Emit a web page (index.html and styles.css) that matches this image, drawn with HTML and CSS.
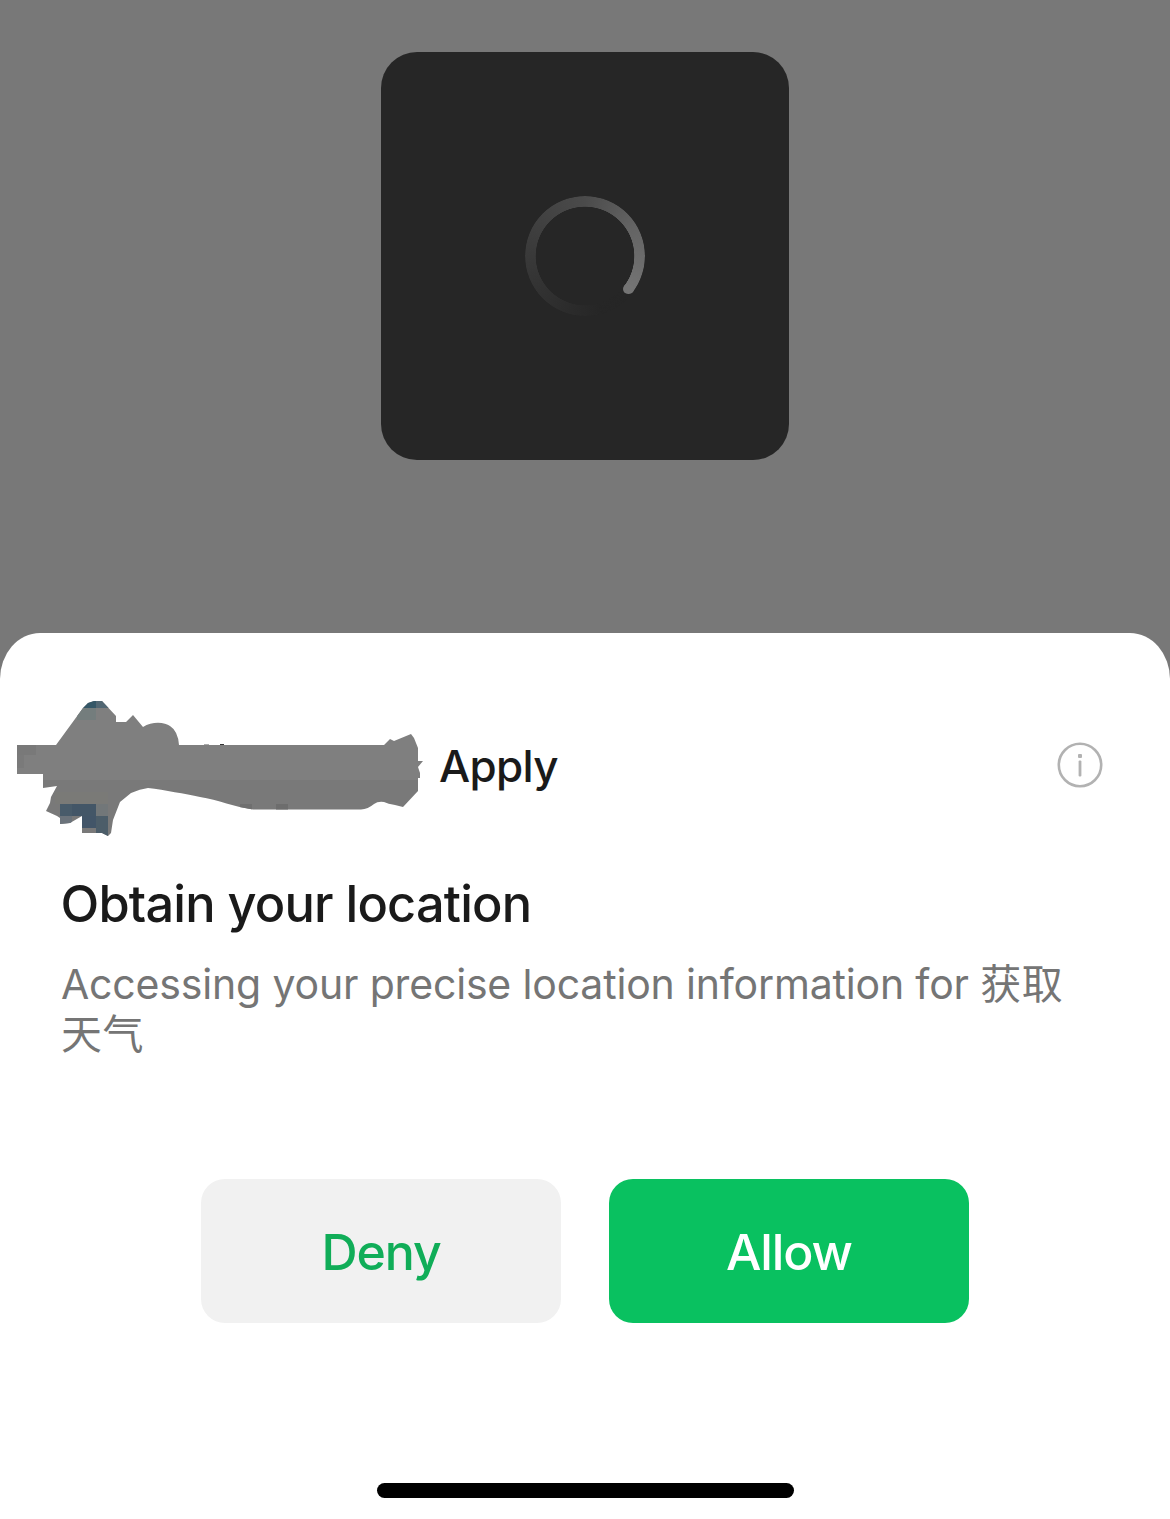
FILE: index.html
```html
<!DOCTYPE html>
<html lang="en">
<head>
    <meta charset="UTF-8">
    <title>Obtain your location</title>
    <link rel="stylesheet" href="styles.css">
</head>
<body>
    <div class="overlay">
        <div class="loading">
            <div class="spinner"></div>
        </div>
    </div>
    <div class="sheet">
        <div class="app-row">
            <svg class="app-name" width="410" height="140" viewBox="16 698 410 140">
                <clipPath id="blob">
                    <path d="M17 745H56L83 708L88 703L94 701H102L116 716V722H126L133 715L143 727C152 721 165 722 170 726Q178 731 179 745H384L390 739L394 741L411 734L414 738L418 748V761H423L418 767L420 773V778H418V791L403 807L395 805Q388 804 384 802Q378 801 374 804Q368 809 361 809.5H253C235 807 218 800 200 797C185 794 165 790 148 788Q140 789 131 793L120 802L113 820L111 833L108 836L102 833H82V816L70 823L60 824V818L57 816L46 811L50 803L51 797L57 786L43 788V774H17Z"/>
                </clipPath>
                <g clip-path="url(#blob)">
                    <rect x="16" y="698" width="410" height="82" fill="#7f7f7f"/>
                    <rect x="16" y="780" width="410" height="58" fill="#797979"/>
                    <rect x="17" y="745" width="19" height="10" fill="#797979"/>
                    <rect x="17" y="755" width="7" height="13" fill="#7a7a7a"/>
                    <rect x="77" y="708" width="19" height="12" fill="#747d7d"/>
                    <rect x="80" y="698" width="16" height="10" fill="#355767"/>
                    <rect x="96" y="698" width="14" height="10" fill="#526773"/>
                    <rect x="55" y="792" width="53" height="12" fill="#7a7a77"/>
                    <rect x="60" y="804" width="12" height="12" fill="#485b6a"/>
                    <rect x="72" y="804" width="24" height="12" fill="#435667"/>
                    <rect x="96" y="804" width="12" height="12" fill="#727779"/>
                    <rect x="60" y="816" width="12" height="8" fill="#6b737b"/>
                    <rect x="82" y="816" width="14" height="12" fill="#425568"/>
                    <rect x="96" y="816" width="12" height="22" fill="#4c5d69"/>
                    <rect x="240" y="804" width="12" height="6" fill="#6f6f6f"/>
                    <rect x="276" y="804" width="12" height="6" fill="#6d6d6d"/>
                </g>
                <path d="M204 744h5v1h-5z" fill="#aaa"/>
                <path d="M220 744h4v1h-4z" fill="#333"/>
            </svg>
            <span class="apply">Apply</span>
            <svg class="info" width="46" height="46" viewBox="0 0 46 46">
                <circle cx="23" cy="23" r="21.2" fill="none" stroke="#b2b2b2" stroke-width="2.6"/>
                <rect x="21" y="12" width="4" height="4" rx="1" fill="#b2b2b2"/>
                <rect x="21.6" y="18.5" width="2.8" height="16" rx="1" fill="#b2b2b2"/>
            </svg>
        </div>
        <h2 class="title">Obtain your location</h2>
        <p class="desc"><span class="desc-text">Accessing your precise location information for </span>获取<br>天气</p>
        <div class="buttons">
            <button class="btn deny">Deny</button>
            <button class="btn allow">Allow</button>
        </div>
        <div class="home-bar"></div>
    </div>
</body>
</html>
```
FILE: styles.css
```css
* {
    box-sizing: border-box;
}

body {
    margin: 0;
    height: 1519px;
    overflow: hidden;
    background-color: #787878;
    font-family: Inter, "Noto Sans CJK SC", sans-serif;
}

.overlay {
    height: 633px;
    padding-top: 52px;
}

.loading {
    width: 408px;
    height: 408px;
    margin: 0 auto;
    display: flex;
    align-items: center;
    justify-content: center;
    border-radius: 36px;
    background-color: #262626;
}

.spinner {
    position: relative;
    width: 120px;
    height: 120px;
}

.spinner::before {
    content: "";
    display: block;
    height: 120px;
    border-radius: 50%;
    background: conic-gradient(#4b4b4b 0deg, #646464 60deg, #747474 127deg, transparent 127.5deg, #262626 165deg, #2c2c2c 200deg, #393939 270deg, #4b4b4b 360deg);
    -webkit-mask: radial-gradient(circle, transparent 49px, #000 49.6px);
    mask: radial-gradient(circle, transparent 49px, #000 49.6px);
}

/* rounded end of the arc */
.spinner::after {
    content: "";
    position: absolute;
    left: 98px;
    top: 87.5px;
    width: 10.5px;
    height: 10.5px;
    border-radius: 50%;
    background-color: #747474;
}

.sheet {
    height: 886px;
    padding-top: 65px;
    border-radius: 40px 40px 0 0 / 46px 46px 0 0;
    background-color: #fff;
}

.app-row {
    display: flex;
    align-items: center;
    height: 140px;
    padding: 0 67px 0 16px;
}

.apply {
    margin: -4px 0 0 13px;
    font-size: 44px;
    font-weight: 500;
    letter-spacing: -0.7px;
    color: #1a1a1a;
}

.info {
    margin: -6px 0 0 auto;
}

.title {
    margin: 35px 0 0 60.5px;
    font-size: 50.5px;
    font-weight: 500;
    line-height: 62px;
    letter-spacing: -0.8px;
    color: #1a1a1a;
}

.desc {
    margin: 24px 0 0 61px;
    font-size: 41px;
    line-height: 50px;
    letter-spacing: 0.5px;
    color: #757575;
    white-space: nowrap;
}

.desc-text {
    letter-spacing: -0.17px;
}

.buttons {
    display: flex;
    justify-content: center;
    gap: 48px;
    margin-top: 120px;
}

.btn {
    width: 360px;
    height: 144px;
    padding: 2px 0 0;
    border: none;
    border-radius: 24px;
    font-family: inherit;
    font-size: 50px;
    font-weight: 500;
    letter-spacing: -1.1px;
}

.deny {
    background-color: #f1f1f1;
    color: #10ad58;
}

.allow {
    background-color: #09c160;
    color: #fff;
}

.home-bar {
    width: 417px;
    height: 15px;
    margin: 160px auto 0;
    border-radius: 8px;
    background-color: #000;
}
```
